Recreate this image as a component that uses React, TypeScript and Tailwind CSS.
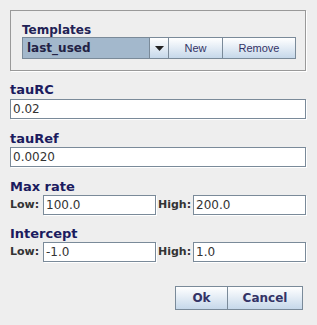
import React from "react";

const font = { fontFamily: '"DejaVu Sans", "Liberation Sans", sans-serif' };
const small = { fontFamily: '"Liberation Sans", Arial, sans-serif' };

function Field({ value, className }: { value: string; className: string }) {
  return (
    <div
      className={`h-[20px] bg-white border border-[#7a8a99] shadow-[1px_1px_0_#ffffff] pl-[2px] text-[12px] leading-[18px] text-[#333333] ${className}`}
    >
      {value}
    </div>
  );
}

function Btn({ label, className, style }: { label: string; className: string; style?: React.CSSProperties }) {
  return (
    <div
      style={style}
      className={`flex items-center justify-center border border-[#7a8a99] bg-gradient-to-b from-[#ffffff] to-[#c6d8ea] text-[#333366] ${className}`}
    >
      {label}
    </div>
  );
}

export default function App() {
  return (
    <div className="w-[317px] h-[325px] bg-[#eeeeee] overflow-hidden" style={font}>
      <div className="pt-[10px] pl-[10px]">
        <div className="w-[296px] h-[61px] border border-[#999999] shadow-[1px_1px_0_#ffffff] pl-[11px] pt-[12px]">
          <div className="text-[12px] leading-[14px] font-bold text-[#222255]">Templates</div>
          <div className="flex h-[22px]">
            <div className="w-[127px] h-[22px] border border-[#7a8a99] border-r-0 bg-[#a3b8cc] pl-[4px] text-[12px] leading-[20px] font-bold text-[#222244]">
              last_used
            </div>
            <div className="w-[20px] h-[22px] border border-[#7a8a99] bg-gradient-to-b from-[#ffffff] to-[#c6d8ea] flex items-center justify-center">
              <svg width="9" height="5" viewBox="0 0 9 5">
                <path d="M0 0 H9 L4.5 5 Z" fill="#222222" />
              </svg>
            </div>
            <Btn label="New" style={small} className="w-[54px] h-[22px] border-l-0 text-[11px] text-[#3a2a6a]" />
            <Btn label="Remove" style={small} className="w-[73px] h-[22px] border-l-0 text-[11px] text-[#3a2a6a]" />
          </div>
        </div>

        <div className="mt-[12px] text-[13px] leading-[14px] font-bold text-[#1b1b5e]">tauRC</div>
        <Field value="0.02" className="mt-[2px] w-[296px]" />

        <div className="mt-[13px] text-[13px] leading-[14px] font-bold text-[#1b1b5e]">tauRef</div>
        <Field value="0.0020" className="mt-[1px] w-[296px]" />

        <div className="mt-[13px] text-[13px] leading-[14px] font-bold text-[#1b1b5e]">Max rate</div>
        <div className="flex items-center mt-[1px] h-[20px]">
          <span className="w-[33px] text-[11px] font-bold text-[#333333]">Low:</span>
          <Field value="100.0" className="w-[113px]" />
          <span className="ml-[1px] w-[36px] pl-[1px] text-[11px] font-bold text-[#333333]">High:</span>
          <Field value="200.0" className="w-[113px]" />
        </div>

        <div className="mt-[12px] text-[13px] leading-[14px] font-bold text-[#1b1b5e]">Intercept</div>
        <div className="flex items-center mt-[1px] h-[20px]">
          <span className="w-[33px] text-[11px] font-bold text-[#333333]">Low:</span>
          <Field value="-1.0" className="w-[113px]" />
          <span className="ml-[1px] w-[36px] pl-[1px] text-[11px] font-bold text-[#333333]">High:</span>
          <Field value="1.0" className="w-[113px]" />
        </div>

        <div className="flex mt-[24px] ml-[165px] h-[24px]">
          <Btn label="Ok" className="w-[53px] h-[24px] text-[12px] font-bold text-[#333344]" />
          <Btn label="Cancel" className="w-[75px] h-[24px] border-l-0 text-[12px] font-bold text-[#333344]" />
        </div>
      </div>
    </div>
  );
}
